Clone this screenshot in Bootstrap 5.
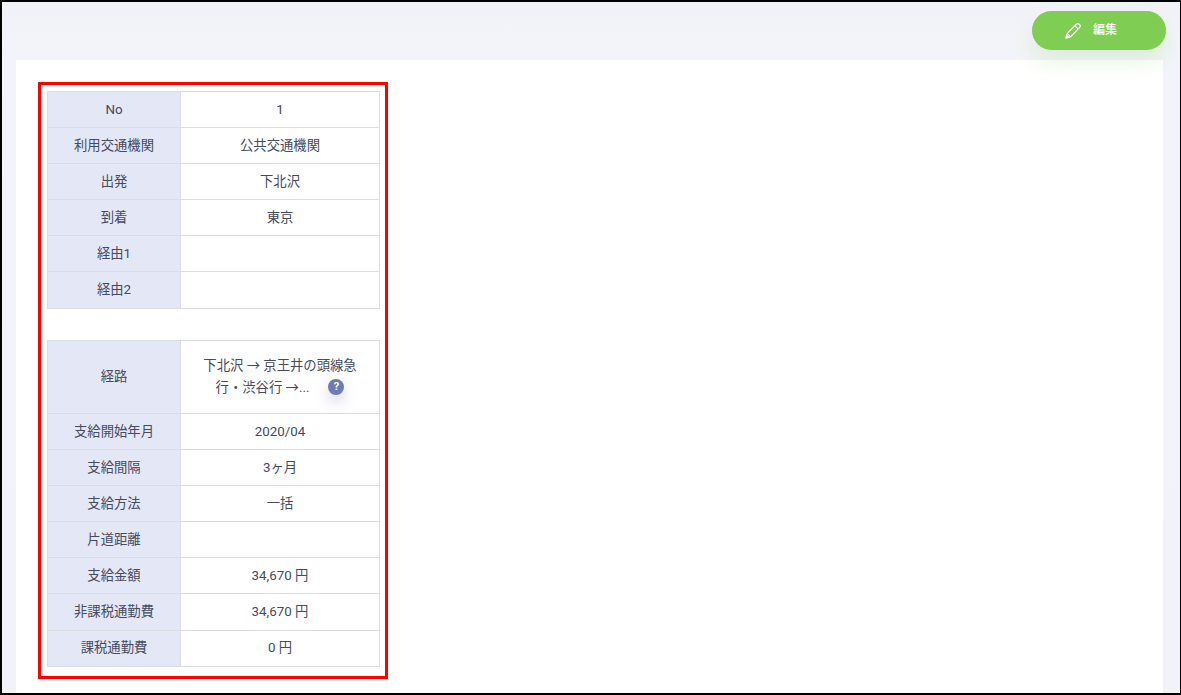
<!DOCTYPE html>
<html lang="ja">
<head>
<meta charset="utf-8">
<title>通勤手当</title>
<link href="https://cdn.jsdelivr.net/npm/bootstrap@5.3.0/dist/css/bootstrap.min.css" rel="stylesheet">
<style>
html,body{height:100%;overflow:hidden}
body{background:#000;font-family:Roboto,"Noto Sans CJK JP",sans-serif;font-size:13.35px;color:#464a5e}
.frame-shell{margin:2px 1px 2px 2px;height:691px;background:linear-gradient(#f1f2f7,#f3f4f9 40px,#f1f3f9);overflow:hidden}
.top-bar{height:58px;padding:9px 14px 0 0}
.edit-pill{width:134px;height:39px;border-radius:20px;background:#7fcd52;color:#fff;border:0;font-size:12px;font-weight:500;box-shadow:0 12px 22px rgba(127,205,82,.18)}
.edit-pill:hover{background:#7fcd52;color:#fff}
.edit-label{margin:-2px 17px 0 3px}
.sheet-panel{margin:0 17px 0 14px;height:633px;background:#fff;padding:22px}
.red-box{width:350px;height:597px;border:3px solid #f00;padding:6px 6px 0 6px}
.info-grid{width:333px;border-collapse:collapse;table-layout:fixed;margin:0}
.info-grid th,.info-grid td{border:1px solid #dcdde3;height:36.1px;padding:0 18px;text-align:center;vertical-align:middle;font-weight:400;line-height:22px}
.info-grid th{width:133px;background:#e3e7f6;padding:0 4px}
.route-row td{height:73.4px}
.grid-gap{margin-top:31px}
.help-dot{display:inline-block;vertical-align:middle;margin:-2px 0 0 19px;width:16px;height:16px;border-radius:50%;background:#6e7bb0;color:#fff;font-size:11px;font-weight:700;line-height:16px;box-shadow:0 6px 14px rgba(80,90,150,.25)}
</style>
</head>
<body>
<div class="frame-shell">
  <div class="top-bar d-flex justify-content-end">
    <button type="button" class="btn edit-pill d-flex align-items-center justify-content-center gap-2 p-0">
      <svg width="18" height="18" viewBox="0 0 18 18" fill="none" stroke="#fff" stroke-width="1.2" stroke-linejoin="round"><path d="M2 16l1.2-4.6L12.6 2c.7-.7 1.7-.7 2.3 0l1 1c.6.6.6 1.6 0 2.2L6.6 14.8z"/><path d="M3.2 11.4l3.4 3.4M11 3.8l3.2 3.2"/><path d="M2 16l2.6-.7-1.9-1.9z" fill="#fff"/></svg>
      <span class="edit-label">編集</span>
    </button>
  </div>
  <div class="sheet-panel">
    <div class="red-box">
      <table class="info-grid">
        <tr><th>No</th><td>1</td></tr>
        <tr><th>利用交通機関</th><td>公共交通機関</td></tr>
        <tr><th>出発</th><td>下北沢</td></tr>
        <tr><th>到着</th><td>東京</td></tr>
        <tr><th>経由1</th><td></td></tr>
        <tr><th>経由2</th><td></td></tr>
      </table>
      <table class="info-grid grid-gap">
        <tr class="route-row"><th>経路</th><td><span>下北沢 → 京王井の頭線急行・渋谷行 →...</span><span class="help-dot">?</span></td></tr>
        <tr><th>支給開始年月</th><td>2020/04</td></tr>
        <tr><th>支給間隔</th><td>3ヶ月</td></tr>
        <tr><th>支給方法</th><td>一括</td></tr>
        <tr><th>片道距離</th><td></td></tr>
        <tr><th>支給金額</th><td>34,670 円</td></tr>
        <tr><th>非課税通勤費</th><td>34,670 円</td></tr>
        <tr><th>課税通勤費</th><td>0 円</td></tr>
      </table>
    </div>
  </div>
</div>
<script src="https://cdn.jsdelivr.net/npm/bootstrap@5.3.0/dist/js/bootstrap.bundle.min.js"></script>
</body>
</html>
